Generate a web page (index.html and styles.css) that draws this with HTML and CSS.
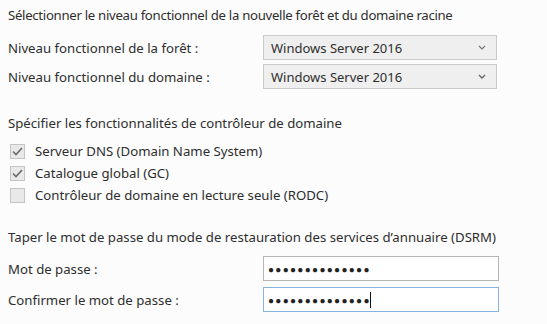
FILE: index.html
```html
<!DOCTYPE html>
<html lang="fr">
<head>
  <meta charset="UTF-8" />
  <title>Options du contrôleur de domaine</title>
  <link rel="stylesheet" href="styles.css">
</head>
<body>
  <div class="page">
    <p class="section-title first">Sélectionner le niveau fonctionnel de la nouvelle forêt et du domaine racine</p>
    <div class="row">
      <label class="row-label">Niveau fonctionnel de la forêt :</label>
      <div class="select">
        <span>Windows Server 2016</span>
        <svg class="chevron" width="8" height="5" viewBox="0 0 8 5"><path d="M1 1 L4 4 L7 1" fill="none" stroke="#777" stroke-width="1.2"/></svg>
      </div>
    </div>
    <div class="row">
      <label class="row-label">Niveau fonctionnel du domaine :</label>
      <div class="select">
        <span>Windows Server 2016</span>
        <svg class="chevron" width="8" height="5" viewBox="0 0 8 5"><path d="M1 1 L4 4 L7 1" fill="none" stroke="#666" stroke-width="1.4"/></svg>
      </div>
    </div>

    <p class="section-title second">Spécifier les fonctionnalités de contrôleur de domaine</p>
    <div class="check">
      <span class="box"><svg width="11" height="9" viewBox="0 0 11 9"><path d="M1 4.5 L4 7.5 L10 1" fill="none" stroke="#6b6b6b" stroke-width="1.6"/></svg></span>
      <span>Serveur DNS (Domain Name System)</span>
    </div>
    <div class="check">
      <span class="box"><svg width="11" height="9" viewBox="0 0 11 9"><path d="M1 4.5 L4 7.5 L10 1" fill="none" stroke="#6b6b6b" stroke-width="1.6"/></svg></span>
      <span>Catalogue global (GC)</span>
    </div>
    <div class="check">
      <span class="box"></span>
      <span>Contrôleur de domaine en lecture seule (RODC)</span>
    </div>

    <p class="section-title third">Taper le mot de passe du mode de restauration des services d’annuaire (DSRM)</p>
    <div class="row pwd">
      <label class="row-label">Mot de passe :</label>
      <div class="input"><span class="dots">●●●●●●●●●●●●●●</span></div>
    </div>
    <div class="row pwd">
      <label class="row-label">Confirmer le mot de passe :</label>
      <div class="input focus"><span class="dots">●●●●●●●●●●●●●●</span><span class="caret"></span></div>
    </div>
  </div>
</body>
</html>
```
FILE: styles.css
```css
body {
  margin: 0;
  background: #fcfcfc;
  color: #2e2e2e;
  font-family: "Noto Sans", "Open Sans", sans-serif;
  font-size: 13.2px;
}
.page {
  padding: 4px 0 0 8px;
}
.section-title {
  margin: 0 0 9px;
  height: 22px;
  line-height: 22px;
}
.section-title.first { letter-spacing: -0.3px; }
.section-title.second { margin-top: 23px; margin-bottom: 6px; }
.section-title.third { margin-top: 20px; margin-bottom: 8px; }
.row {
  display: flex;
  align-items: center;
  height: 25px;
  margin-bottom: 4px;
}
.row.pwd { margin-bottom: 6px; }
.row-label {
  width: 255px;
}
.select {
  box-sizing: border-box;
  width: 234px;
  height: 25px;
  background: #efefef;
  border: 1px solid #cacaca;
  display: flex;
  align-items: center;
  justify-content: space-between;
  padding: 0 10px 0 7px;
  font-size: 13px;
}
.input {
  width: 236px;
  height: 25px;
  box-sizing: border-box;
  background: #fff;
  border: 1px solid #b5b5b5;
  display: flex;
  align-items: center;
  padding-left: 4px;
}
.input.focus { border-color: #86b3e0; }
.dots {
  font-size: 10px;
  letter-spacing: 1.3px;
  color: #222;
}
.caret {
  width: 1px;
  height: 16px;
  background: #111;
  margin-left: -1px;
}
.check {
  display: flex;
  align-items: center;
  height: 22px;
}
.box {
  width: 13px;
  height: 13px;
  border: 1px solid #c4c4c4;
  background: #e9e9e9;
  margin: 0 10px 0 2px;
  display: flex;
  align-items: center;
  justify-content: center;
}
```
